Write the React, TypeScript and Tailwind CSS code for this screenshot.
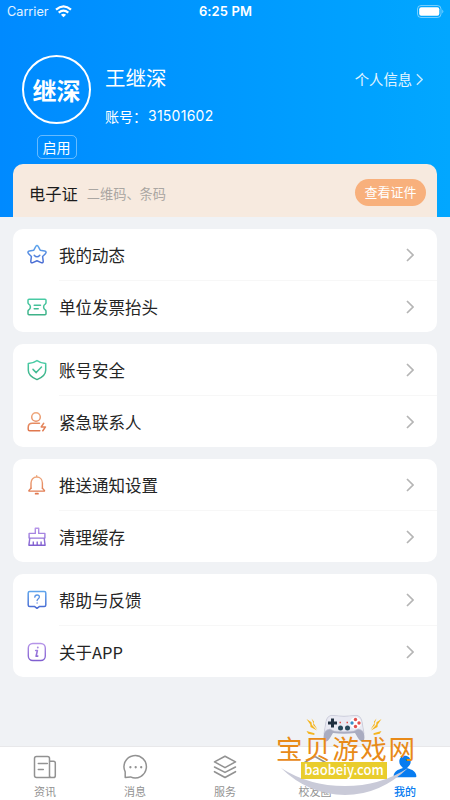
import type { ReactNode } from "react"

type Item = {
  label: string
  icon: ReactNode
}

const StarIcon = () => (
  <svg width="22" height="22" viewBox="0 0 22 22" fill="none" stroke="url(#blue)" strokeWidth="1.5" strokeLinejoin="round" strokeLinecap="round">
    <path d="M9.7 2.6Q11 .6 12.3 2.6L14.2 6.2l4.5.8q2.2.6.9 2.4l-3 3.2.6 4.5q.1 2.3-2 1.5L11 16.700l-4.200 1.900q-2.100.8-2-1.500l.6-4.500-3-3.200q-1.300-1.800.9-2.400l4.500-.8z" />
    <path d="M8.200 11.200q2.800 3.200 5.600 0" />
  </svg>
)

const TicketIcon = () => (
  <svg width="22" height="22" viewBox="0 0 22 22" fill="none" stroke="url(#green)" strokeWidth="1.5" strokeLinejoin="round" strokeLinecap="round">
    <path d="M3 3.300h16q1 0 1 1v2.500q0 .8-.7 1.200c-2.300 1.600-2.300 4.400 0 6q.7.400.7 1.200v2.500q0 1-1 1H3q-1 0-1-1v-2.500q0-.8.700-1.200c2.300-1.600 2.300-4.400 0-6Q2 7.600 2 6.800V4.300q0-1 1-1z" />
    <path d="M8.200 9.200h6.300M8.200 12.800h4" />
  </svg>
)

const ShieldIcon = () => (
  <svg width="22" height="22" viewBox="0 0 22 22" fill="none" stroke="url(#green)" strokeWidth="1.5" strokeLinejoin="round" strokeLinecap="round">
    <path d="M11 1.600c2.600 1.800 5.200 2.700 8.700 2.900v6.700c0 4.300-3.800 7.400-8.700 9.400-4.900-2-8.700-5.100-8.700-9.400V4.500C5.800 4.300 8.400 3.400 11 1.600z" />
    <path d="M7 10.400l3.200 3.200 5.300-5.500" />
  </svg>
)

const ContactIcon = () => (
  <svg width="22" height="22" viewBox="0 0 22 22" fill="none" stroke="url(#orange)" strokeWidth="1.5" strokeLinejoin="round" strokeLinecap="round">
    <circle cx="10" cy="6" r="4.300" />
    <path d="M13.500 12.300H6.300c-2.500 0-4.100 1.700-4.100 4.100v1.800q0 1.500 1.500 1.500h10.100" />
    <path d="M17.700 12.300l-2.500 3.600h4.300l-2.700 3.900" />
  </svg>
)

const BellIcon = () => (
  <svg width="22" height="22" viewBox="0 0 22 22" fill="none" stroke="url(#orange)" strokeWidth="1.400" strokeLinejoin="round" strokeLinecap="round">
    <path d="M10.700 1.700v1.200M5 14.200V9c0-3.600 2.400-6 5.700-6s5.700 2.400 5.700 6v5.200" />
    <path d="M5 14.200l-2 2.200q-.4.700.4.700h14.600q.8 0 .4-.7l-2-2.200" />
    <path d="M9.600 19.700h2.400" strokeWidth="1.700" />
  </svg>
)

const BroomIcon = () => (
  <svg width="22" height="22" viewBox="0 0 22 22" fill="none" stroke="url(#purple)" strokeWidth="1.400" strokeLinejoin="round">
    <path d="M9.300 7.400V2.300h3.400v5.100h6.200v4.700H3.100V7.400zM3.800 12.100L2.900 19.200h16.200l-.9-7.100M7.300 19.200v-3.700M11.200 19.200v-3.700M15.100 19.200v-3.700" />
  </svg>
)

const HelpIcon = () => (
  <svg width="22" height="22" viewBox="0 0 22 22" fill="none" stroke="url(#blue)" strokeWidth="1.5" strokeLinejoin="round" strokeLinecap="round">
    <path d="M3.700 2.500h14.600q1.500 0 1.500 1.500v11.900q0 1.500-1.500 1.500h-4.700L11 19.300l-2.600-1.900H3.700q-1.500 0-1.500-1.500V4q0-1.500 1.500-1.500z" />
    <path d="M8.800 8.200c.1-1.500 1-2.200 2.300-2.200s2.300.8 2.300 2c0 1.600-2.300 1.800-2.300 3.600M11.100 14v.1" strokeWidth="1.300" />
  </svg>
)

const InfoIcon = () => (
  <svg width="22" height="22" viewBox="0 0 22 22" fill="none" stroke="url(#purple)" strokeWidth="1.400" strokeLinejoin="round" strokeLinecap="round">
    <rect x="2.300" y="2.500" width="17" height="17" rx="4.500" />
    <path d="M9.700 9.500h1.700l-1.300 5.600h1.700" strokeWidth="1.600" />
    <path d="M11.800 6.500v.1" strokeWidth="1.900" />
  </svg>
)

const groups: Item[][] = [
  [
    { label: "我的动态", icon: <StarIcon /> },
    { label: "单位发票抬头", icon: <TicketIcon /> },
  ],
  [
    { label: "账号安全", icon: <ShieldIcon /> },
    { label: "紧急联系人", icon: <ContactIcon /> },
  ],
  [
    { label: "推送通知设置", icon: <BellIcon /> },
    { label: "清理缓存", icon: <BroomIcon /> },
  ],
  [
    { label: "帮助与反馈", icon: <HelpIcon /> },
    { label: "关于APP", icon: <InfoIcon /> },
  ],
]

const tabs: Item[] = [
  {
    label: "资讯",
    icon: (
      <svg width="26" height="26" viewBox="0 0 26 26" fill="none" stroke="currentColor" strokeWidth="1.5" strokeLinejoin="round" strokeLinecap="round">
        <path d="M4.500 2.500h11q2 0 2 2v19H4.500q-2 0-2-2v-17q0-2 2-2zM18 7.300h3.500q1.800 0 1.800 1.800v12.600q0 1.800-1.800 1.800h-2.200q-1.800 0-1.800-1.800M6.300 9.500h9M6.300 15.500h5" />
      </svg>
    ),
  },
  {
    label: "消息",
    icon: (
      <svg width="26" height="26" viewBox="0 0 26 26" fill="none" stroke="currentColor" strokeWidth="1.5" strokeLinejoin="round" strokeLinecap="round">
        <path d="M3.200 23.500v-5.700A11.200 11.200 0 1 1 8.500 22.900z" />
        <path d="M8.400 13.200v.1M13.700 13.200v.1M19.200 13.200v.1" strokeWidth="2.300" />
      </svg>
    ),
  },
  {
    label: "服务",
    icon: (
      <svg width="26" height="26" viewBox="0 0 26 26" fill="none" stroke="currentColor" strokeWidth="1.600" strokeLinejoin="round" strokeLinecap="round">
        <path d="M13 2.200l10.500 5.700L13 13.600 2.500 7.900zM2.500 13L13 18.400 23.500 13M2.500 17.700L13 23.500l10.500-5.800" />
      </svg>
    ),
  },
  {
    label: "校友圈",
    icon: (
      <svg width="26" height="26" viewBox="0 0 26 26" fill="none" stroke="currentColor" strokeWidth="1.5" strokeLinejoin="round">
        <path d="M2.500 8.500L13 2.500l10.500 6L13 14zM6.500 11v8q6.500 4 13 0v-8" />
      </svg>
    ),
  },
  {
    label: "我的",
    icon: (
      <svg width="26" height="26" viewBox="0 0 26 26" fill="currentColor">
        <path d="M13 1.700c3.300 0 5.700 2.400 5.700 5.700 0 2.600-1.300 4.600-3.200 5.900v1c4.700 1.300 8.600 3.300 8.900 8q0 1-1 1H2.600q-1 0-1-1c.3-4.700 4.200-6.700 8.900-8v-1c-1.900-1.300-3.200-3.300-3.200-5.900 0-3.300 2.400-5.700 5.700-5.700z" />
      </svg>
    ),
  },
]

const Chevron = ({ className }: { className: string }) => (
  <svg className={className} viewBox="0 0 8 14" fill="none" stroke="currentColor" strokeWidth="1.700">
    <path d="M1 1l6 6-6 6" />
  </svg>
)

function Gradients() {
  return (
    <svg className="absolute size-0">
      <defs>
        <linearGradient id="blue" x1="0" y1="0" x2="0" y2="22" gradientUnits="userSpaceOnUse">
          <stop stopColor="#62adf0" />
          <stop offset="1" stopColor="#4661ce" />
        </linearGradient>
        <linearGradient id="green" x1="0" y1="0" x2="0" y2="22" gradientUnits="userSpaceOnUse">
          <stop stopColor="#4bd0aa" />
          <stop offset="1" stopColor="#3cad83" />
        </linearGradient>
        <linearGradient id="orange" x1="0" y1="0" x2="0" y2="22" gradientUnits="userSpaceOnUse">
          <stop stopColor="#f0ad82" />
          <stop offset="1" stopColor="#de7148" />
        </linearGradient>
        <linearGradient id="purple" x1="0" y1="0" x2="0" y2="22" gradientUnits="userSpaceOnUse">
          <stop stopColor="#bd9cec" />
          <stop offset="1" stopColor="#7958cc" />
        </linearGradient>
      </defs>
    </svg>
  )
}

function StatusBar() {
  return (
    <div className="grid h-[23px] grid-cols-3 items-center pl-[7px] pr-[6px] font-['Inter'] text-white">
      <div className="flex items-center gap-1.5 pt-px text-[12.7px] text-white/90">
        Carrier
        <svg width="17" height="13" viewBox="0 0 17 13" fill="none" stroke="white" strokeWidth="2.200">
          <path d="M1 4.700q7.500-6.500 15 0M3.700 7.700q4.800-4 9.600 0" />
          <path d="M5.900 9.700q2.600-2.100 5.200 0L8.500 12.300z" fill="white" stroke="none" />
        </svg>
      </div>
      <div className="text-center text-[13px] font-semibold tracking-[0.1px]">6:25 PM</div>
      <svg className="justify-self-end" width="27" height="13" viewBox="0 0 27 13">
        <rect x=".5" y=".5" width="23.500" height="12" rx="3.500" fill="none" stroke="white" strokeOpacity=".45" />
        <rect x="2.200" y="2.200" width="20.100" height="8.600" rx="2" fill="white" />
        <path d="M25.300 4.500q2 2 0 4z" fill="white" fillOpacity=".5" />
      </svg>
    </div>
  )
}

function Header() {
  return (
    <header className="flex h-[217px] flex-col bg-linear-to-r from-[#008aff] to-[#02a7ff]">
      <StatusBar />
      <div className="flex h-[141px] pl-[22px] pr-[27px] pt-8 text-white">
        <div className="flex w-[69px] flex-col items-center">
          <div className="flex size-[69px] shrink-0 items-center justify-center rounded-full border-2 border-white text-2xl font-bold">继深</div>
          <div className="mt-[11px] flex h-6 w-10 items-center justify-center rounded-[5px] border border-white/40 text-sm leading-none">启用</div>
        </div>
        <div className="ml-[14px] flex-1">
          <div className="mt-[7px] text-[20.5px] leading-[30px]">王继深</div>
          <div className="mt-[14px] flex text-[14px] leading-5">
            账号：<span className="ml-px font-['Inter'] tracking-[0.25px]">31501602</span>
          </div>
        </div>
        <div className="mt-[14px] flex h-5 items-center gap-1 text-[14.3px] text-white/90">
          个人信息
          <Chevron className="h-[13px] w-[7px] text-white/75" />
        </div>
      </div>
      <div className="mx-[13px] flex flex-1 items-center rounded-t-[10px] bg-[#f7eadf] pl-4 pr-[11px] pt-[3px]">
        <span className="mt-0.5 text-[16.3px] text-[#1c1c1c]">电子证</span>
        <span className="ml-[9px] mt-[3px] flex-1 text-[13.2px] text-[#aaa6a2]">二维码、条码</span>
        <button className="h-[27px] w-[71px] rounded-full bg-[#f8b07c] text-[13px] text-white">查看证件</button>
      </div>
    </header>
  )
}

function Gamepad() {
  return (
    <svg width="80" height="32" viewBox="0 0 80 32">
      <g fill="#f5b51e">
        <path d="M2.500 6l5 3.200.3 2.500 5.200 5.800-6.500-3.500-.2-2.600zM7.500 5.500l2.500 3-.2 2 3.700 6-4.300-4.500.2-2zM2.500 18l8 2.200-.2 1.800-6-1.300z" />
        <path d="M77.500 6l-5 3.200-.3 2.500-5.200 5.800 6.500-3.500.2-2.600zM72.500 5.500l-2.500 3 .2 2-3.700 6 4.300-4.500-.2-2zM77.500 18l-8 2.200.2 1.800 6-1.300z" />
      </g>
      <path d="M29 2.500q11 1.500 22 0c4-.5 6 2 7 6l2.300 14c1 7-3 8-6.300 2.500l-3-5q-11 1.500-22 0l-3 5c-3.300 5.500-7.300 4.500-6.300-2.500L22 8.500c1-4 3-6.500 7-6z" fill="#a9acc0" />
      <path d="M29 2.500q11 1.500 22 0c4-.5 6 2 7 6l2 12q-1-4-6-4.500l-4 2q-10 1.500-20 0l-4-2q-5 .5-6 4.500l2-12c1-4 3-6.500 7-6z" fill="#e9eaf3" stroke="#c3c5d3" strokeWidth=".6" />
      <path d="M27 5.500h3v3h3v3h-3v3h-3v-3h-3v-3h3z" fill="#1f2f3f" />
      <circle cx="36.500" cy="15" r="2.500" fill="#26475a" />
      <circle cx="43.500" cy="15" r="2.500" fill="#26475a" />
      <circle cx="51.500" cy="10" r="5.700" fill="#fff" />
      <circle cx="51.500" cy="6.500" r="1.700" fill="#e2504d" />
      <circle cx="51.500" cy="13.500" r="1.700" fill="#e2504d" />
      <circle cx="48" cy="10" r="1.700" fill="#3990c7" />
      <circle cx="55" cy="10" r="1.700" fill="#e2504d" />
      <path d="M35.500 9.500H37M42.500 9.500H44" stroke="#e2504d" strokeWidth="1.400" />
    </svg>
  )
}

function Watermark() {
  return (
    <div className="absolute left-[276px] top-[713px] w-[142px]">
      <svg className="absolute left-[5px] top-[55px]" width="128" height="29" viewBox="0 0 128 29">
        <path d="M0 0Q28 18 64 18Q99 18 127 0Q99 27 64 27Q28 27 0 0z" fill="#c9cad8" />
      </svg>
      <div className="ml-7 h-[21px]">
        <Gamepad />
      </div>
      <div className="relative h-[28px] whitespace-nowrap text-[26.5px] leading-[27px] tracking-[1.6px] text-[#e88a18]">宝贝游戏网</div>
      <div className="relative ml-[25px] flex h-[17px] w-[86px] items-center justify-center bg-[#e9cd2d] text-[13px] font-medium leading-[14px] text-white">
        <span className="-mt-px scale-y-110">baobeiy.com</span>
      </div>
    </div>
  )
}

export default function App() {
  return (
    <div className="relative flex h-[800px] w-[450px] flex-col overflow-hidden bg-[#f0f2f5] font-['Noto_Sans_CJK_SC',sans-serif]">
      <Gradients />
      <Header />

      <main className="flex flex-1 flex-col gap-3 px-[13px] pt-3">
        {groups.map((group, i) => (
          <section key={i} className="h-[103px] rounded-[10px] bg-white">
            {group.map((item, j) => (
              <div key={item.label} className="flex h-[52px] items-center pl-[13px]">
                {item.icon}
                <div className={`ml-[11px] flex h-full flex-1 items-center justify-between pr-[23px] ${j === 0 ? "border-b border-[#f7f7f7] pt-px" : ""}`}>
                  <span className="text-[16.5px] text-[#252525]">{item.label}</span>
                  <Chevron className="h-[14px] w-2 text-[#b5b5b5]" />
                </div>
              </div>
            ))}
          </section>
        ))}
      </main>

      <nav className="grid h-[54px] grid-cols-5 border-t border-[#e8e8ea] bg-white">
        {tabs.map((tab) => (
          <div key={tab.label} className={`flex flex-col items-center pt-[7px] ${tab.label === "我的" ? "text-[#087cf0]" : "text-[#929292]"}`}>
            {tab.icon}
            <span className={`mt-[3px] text-[11px] leading-4 ${tab.label === "我的" ? "font-medium" : ""}`}>{tab.label}</span>
          </div>
        ))}
      </nav>

      <Watermark />
    </div>
  )
}
